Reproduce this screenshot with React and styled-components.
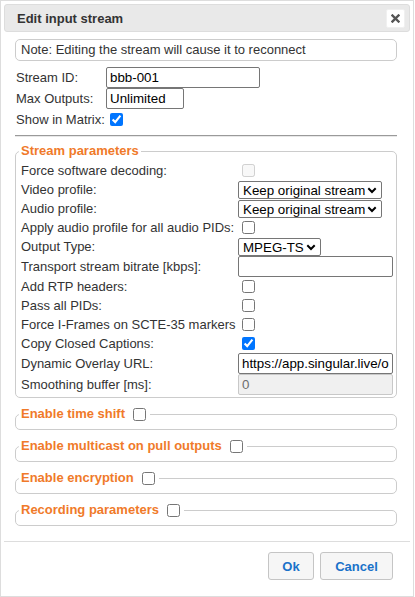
import styled, { createGlobalStyle } from "styled-components";

const GlobalStyle = createGlobalStyle`
  html, body {
    margin: 0;
    padding: 0;
    background: #fff;
  }
  body {
    font-family: "Liberation Sans", Arial, sans-serif;
    font-size: 13px;
    color: #333;
  }
  * {
    box-sizing: border-box;
  }
`;

const params = [
  { label: "Force software decoding:", type: "checkbox", disabled: true },
  { label: "Video profile:", type: "select", value: "Keep original stream", width: 144 },
  { label: "Audio profile:", type: "select", value: "Keep original stream", width: 144 },
  { label: "Apply audio profile for all audio PIDs:", type: "checkbox" },
  { label: "Output Type:", type: "select", value: "MPEG-TS", width: 83 },
  { label: "Transport stream bitrate [kbps]:", type: "text", value: "" },
  { label: "Add RTP headers:", type: "checkbox" },
  { label: "Pass all PIDs:", type: "checkbox" },
  { label: "Force I-Frames on SCTE-35 markers", type: "checkbox" },
  { label: "Copy Closed Captions:", type: "checkbox", checked: true },
  { label: "Dynamic Overlay URL:", type: "text", value: "https://app.singular.live/output/6Wq9kD3b/Output" },
  { label: "Smoothing buffer [ms]:", type: "text", value: "0", disabled: true },
];

const sections = ["Enable time shift", "Enable multicast on pull outputs", "Enable encryption", "Recording parameters"];

function Control({ item }) {
  if (item.type === "checkbox") {
    return <Checkbox type="checkbox" defaultChecked={item.checked} disabled={item.disabled} />;
  }
  if (item.type === "select") {
    return (
      <SelectBox $w={item.width}>
        <Select defaultValue={item.value}>
          <option>{item.value}</option>
        </Select>
        <Chevron width="10" height="7" viewBox="0 0 10 7">
          <path d="M1.3 1.3 L5 5 L8.7 1.3" fill="none" stroke="#000" strokeWidth="2" />
        </Chevron>
      </SelectBox>
    );
  }
  return <TextInput $w={155} defaultValue={item.value} disabled={item.disabled} />;
}

export default function App() {
  return (
    <>
      <GlobalStyle />
      <Dialog>
        <Header>
          <Title>Edit input stream</Title>
          <CloseButton>
            <svg width="9" height="9" viewBox="0 0 9 9">
              <path d="M1.5 1.5 L7.5 7.5 M7.5 1.5 L1.5 7.5" stroke="#555" strokeWidth="2.4" strokeLinecap="square" />
            </svg>
          </CloseButton>
        </Header>

        <Content>
          <Note>Note: Editing the stream will cause it to reconnect</Note>

          <FormRow>
            <FormLabel>Stream ID:</FormLabel>
            <TextInput $w={154} defaultValue="bbb-001" />
          </FormRow>
          <FormRow>
            <FormLabel>Max Outputs:</FormLabel>
            <TextInput $w={78} defaultValue="Unlimited" />
          </FormRow>
          <FormRow $h={20}>
            <FormLabel>Show in Matrix:</FormLabel>
            <Checkbox type="checkbox" defaultChecked />
          </FormRow>

          <Divider />

          <Fieldset>
            <Legend>Stream parameters</Legend>
            {params.map((item) => (
              <ParamRow key={item.label}>
                <ParamLabel>{item.label}</ParamLabel>
                <Control item={item} />
              </ParamRow>
            ))}
          </Fieldset>

          {sections.map((s) => (
            <Collapsed key={s}>
              <Legend>
                <span>{s}</span>
                <LegendCheck type="checkbox" />
              </Legend>
            </Collapsed>
          ))}
        </Content>

        <Footer>
          <Button $w={46}>Ok</Button>
          <Button $w={73}>Cancel</Button>
        </Footer>
      </Dialog>
    </>
  );
}

const Dialog = styled.div`
  width: 414px;
  height: 597px;
  border: 1px solid #ddd;
  padding: 3px;
  display: flex;
  flex-direction: column;
  background: #fff;
`;

const Header = styled.div`
  height: 28px;
  flex-shrink: 0;
  display: flex;
  align-items: center;
  justify-content: space-between;
  padding: 0 4px 0 12px;
  background: #e9e9e9;
  border: 1px solid #ddd;
  border-radius: 3px;
`;

const Title = styled.span`
  font-weight: bold;
  font-size: 13px;
  color: #333;
`;

const CloseButton = styled.div`
  width: 19px;
  height: 19px;
  display: flex;
  align-items: center;
  justify-content: center;
  background: #fff;
  border: 1px solid #f0f0f0;
  border-radius: 2px;
`;

const Content = styled.div`
  flex: 1;
  padding: 7px 13px 0 11px;
`;

const Note = styled.div`
  height: 22px;
  border: 1px solid #ccc;
  border-radius: 5px;
  padding: 0 5px;
  line-height: 20px;
  margin-bottom: 6px;
  color: #333;
`;

const FormRow = styled.div`
  display: flex;
  align-items: center;
  height: ${(p) => (p.$h ? `${p.$h}px` : "auto")};
`;

const FormLabel = styled.span`
  width: 91px;
  padding-left: 1px;
  flex-shrink: 0;
`;

const TextInput = styled.input`
  width: ${(p) => p.$w}px;
  height: 21px;
  margin: 0;
  padding: 1px 3px;
  font-family: "Liberation Sans", Arial, sans-serif;
  font-size: 13.33px;
  color: #000;
  background: #fff;
  border: 1px solid #767676;
  border-radius: 2px;

  &:disabled {
    background: #f0f0f0;
    border-color: #c8c8c8;
    color: #6d6d6d;
  }
`;

const Checkbox = styled.input`
  width: 13px;
  height: 13px;
  margin: 3px 3px 3px 4px;
`;

const SelectBox = styled.div`
  position: relative;
  width: ${(p) => p.$w}px;
  height: 18px;
  margin-top: 1px;
`;

const Select = styled.select`
  appearance: none;
  -webkit-appearance: none;
  width: 100%;
  height: 100%;
  margin: 0;
  padding: 0 16px 0 4px;
  font-family: "Liberation Sans", Arial, sans-serif;
  font-size: 13.33px;
  color: #000;
  background: #fff;
  border: 1px solid #767676;
  border-radius: 2px;
`;

const Chevron = styled.svg`
  position: absolute;
  right: 5px;
  top: 6px;
  pointer-events: none;
`;

const Divider = styled.hr`
  margin: 6px 0 5px;
  border: 0;
  border-top: 1px solid #9a9a9a;
  border-bottom: 1px solid #e8e8e8;
`;

const Fieldset = styled.fieldset`
  margin: 0;
  min-width: 0;
  border: 1px solid #ccc;
  border-radius: 5px;
  padding: 1px 3px 2px 5px;
`;

const Collapsed = styled(Fieldset)`
  margin-top: 7px;
  padding: 0 3px 6px 5px;
`;

const Legend = styled.legend`
  display: flex;
  align-items: center;
  height: 18px;
  line-height: 18px;
  padding: 0 2px;
  margin-left: -2px;
  color: #f07a2a;
  font-weight: bold;
  font-size: 13px;
`;

const LegendCheck = styled.input`
  width: 13px;
  height: 13px;
  margin: 0 2px 0 8px;
`;

const ParamRow = styled.div`
  display: flex;
  align-items: center;
`;

const ParamLabel = styled.span`
  width: 217px;
  flex-shrink: 0;
  line-height: 16px;
  white-space: nowrap;
`;

const Footer = styled.div`
  flex-shrink: 0;
  display: flex;
  justify-content: flex-end;
  gap: 6px;
  border-top: 1px solid #ddd;
  padding: 10px 17px 13px;
`;

const Button = styled.button`
  width: ${(p) => p.$w}px;
  height: 28px;
  padding: 0;
  background: #f6f6f6;
  border: 1px solid #c5c5c5;
  border-radius: 3px;
  color: #1a72c9;
  font-family: "Liberation Sans", Arial, sans-serif;
  font-weight: bold;
  font-size: 13px;
  cursor: pointer;
`;
